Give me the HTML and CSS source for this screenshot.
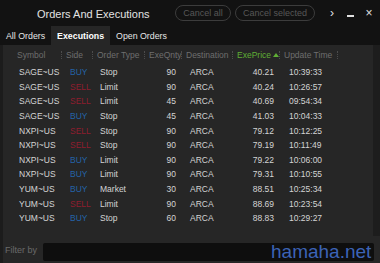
FILE: index.html
```html
<!DOCTYPE html>
<html>
<head>
    <title>Orders And Executions</title>
    <link rel="stylesheet" href="styles.css">
</head>
    <body>
        <div class="window">
            <!-- title bar with cancel buttons and window controls -->
            <div class="titlebar">
                <div class="title">Orders And Executions</div>
                <button class="pill">Cancel all</button>
                <button class="pill">Cancel selected</button>
                <div class="controls">
                    <span class="ctl">&#8250;</span>
                    <span class="ctl min"></span>
                    <span class="ctl">&#215;</span>
                </div>
            </div>
            <!-- tabs -->
            <div class="tabs">
                <div class="tab">All Orders</div>
                <div class="tab active">Executions</div>
                <div class="tab">Open Orders</div>
            </div>
            <!-- executions grid -->
            <div class="panel">
                <div class="grid-area">
                    <div class="grid">
                        <div class="row head">
                            <div class="hc first">Symbol</div>
                            <div class="hc">Side</div>
                            <div class="hc">Order Type</div>
                            <div class="hc">ExeQnty</div>
                            <div class="hc">Destination</div>
                            <div class="hc sorted">ExePrice <svg class="arrow" width="6" height="4" viewBox="0 0 6 4"><path d="M0 4 L3 0 L6 4 Z" fill="#5fae35"/></svg></div>
                            <div class="hc">Update Time</div>
                        </div>
                        <div id="rows"></div>
                    </div>
                    <div class="scrollbar"></div>
                </div>
                <!-- filter box -->
                <div class="filter">
                    <label for="filterBy">Filter by</label>
                    <input id="filterBy" type="text">
                </div>
            </div>
        </div>
        <div class="watermark">hamaha.net</div>

        <script>
            // executions shown in the grid
            const executions = [
                ["SAGE~US", "BUY", "Stop", 90, "ARCA", "40.21", "10:39:33"],
                ["SAGE~US", "SELL", "Limit", 90, "ARCA", "40.24", "10:26:57"],
                ["SAGE~US", "SELL", "Limit", 45, "ARCA", "40.69", "09:54:34"],
                ["SAGE~US", "BUY", "Stop", 45, "ARCA", "41.03", "10:04:33"],
                ["NXPI~US", "SELL", "Stop", 90, "ARCA", "79.12", "10:12:25"],
                ["NXPI~US", "SELL", "Stop", 90, "ARCA", "79.19", "10:11:49"],
                ["NXPI~US", "BUY", "Limit", 90, "ARCA", "79.22", "10:06:00"],
                ["NXPI~US", "BUY", "Limit", 90, "ARCA", "79.31", "10:10:55"],
                ["YUM~US", "BUY", "Market", 30, "ARCA", "88.51", "10:25:34"],
                ["YUM~US", "SELL", "Limit", 90, "ARCA", "88.69", "10:23:54"],
                ["YUM~US", "BUY", "Stop", 60, "ARCA", "88.83", "10:29:27"]
            ];

            const rows = document.getElementById("rows");
            executions.forEach(e => {
                const row = document.createElement("div");
                row.className = "row";
                row.innerHTML =
                    '<div class="c sym">' + e[0] + '</div>' +
                    '<div class="c side ' + e[1].toLowerCase() + '">' + e[1] + '</div>' +
                    '<div class="c type">' + e[2] + '</div>' +
                    '<div class="c qty">' + e[3] + '</div>' +
                    '<div class="c dest">' + e[4] + '</div>' +
                    '<div class="c price">' + e[5] + '</div>' +
                    '<div class="c time">' + e[6] + '</div>';
                rows.appendChild(row);
            });
        </script>
    </body>
</html>
```

FILE: styles.css
```css
body {
    margin: 0;
    background-color: #121212;
    font-family: "Liberation Sans", Arial, sans-serif;
    width: 380px;
    height: 263px;
    overflow: hidden;
}

.window {
    display: flex;
    flex-direction: column;
    height: 263px;
}

/* title bar */
.titlebar {
    height: 26px;
    display: flex;
    align-items: center;
    flex-shrink: 0;
}

.title {
    flex: 1;
    padding-left: 37px;
    font-size: 11px;
    color: #e2e2e2;
    padding-top: 1px;
}

.pill {
    height: 16px;
    margin-right: 4px;
    padding: 0;
    border: 1px solid #3c3c3c;
    border-radius: 8px;
    background: transparent;
    color: #575757;
    font-family: "Liberation Sans", Arial, sans-serif;
    font-size: 9px;
    line-height: 14px;
    white-space: nowrap;
}

.pill:first-of-type {
    width: 56px;
}

.pill:nth-of-type(2) {
    width: 80px;
}

.controls {
    display: flex;
    align-items: center;
    margin-left: 8px;
    margin-right: 6px;
    gap: 8px;
}

.ctl {
    width: 10px;
    text-align: center;
    color: #e0e0e0;
    font-size: 12px;
    line-height: 12px;
}

.ctl.min {
    height: 2px;
    width: 7px;
    margin: 6px 2px 0 2px;
    background-color: #e0e0e0;
}

/* tabs */
.tabs {
    height: 19px;
    display: flex;
    align-items: stretch;
    flex-shrink: 0;
}

.tab {
    padding: 0 6px;
    font-size: 8.8px;
    line-height: 20px;
    color: #e6e6e6;
}

.tab.active {
    background-color: #262626;
    font-weight: bold;
    color: #ffffff;
}

/* main panel */
.panel {
    flex: 1;
    display: flex;
    flex-direction: column;
    background-color: #262626;
    border-left: 3px solid #1c1c1c;
}

.grid-area {
    flex: 1;
    display: flex;
}

.grid {
    flex: 1;
}

.scrollbar {
    width: 7px;
    background-color: #1d1d1d;
}

.row {
    display: grid;
    grid-template-columns: 59px 31px 52px 37px 51px 47px 58px;
    height: 14.6px;
    align-items: center;
    font-size: 8.5px;
    color: #d4d4d4;
    white-space: nowrap;
}

.row.head {
    height: 20px;
    color: #6e6e6e;
}

.hc {
    position: relative;
    padding-left: 4px;
}

.hc.first {
    padding-left: 14px;
}

.hc::after {
    content: "";
    position: absolute;
    right: 0;
    top: 1px;
    height: 8px;
    border-left: 1px dotted #4c4c4c;
}

.hc.sorted {
    color: #5fae35;
}

.arrow {
    vertical-align: 1px;
}

.c.sym {
    padding-left: 16px;
}

.c.side {
    padding-left: 8px;
}

.buy {
    color: #2463a8;
}

.sell {
    color: #8f1d2e;
}

.c.type {
    padding-left: 7px;
}

.c.qty, .c.price {
    text-align: right;
    padding-right: 6px;
}

.c.dest {
    padding-left: 8px;
}

.c.time {
    padding-left: 9px;
}

/* filter bar */
.filter {
    height: 27px;
    display: flex;
    align-items: center;
    padding-right: 6px;
}

.filter label {
    width: 38px;
    padding-left: 2px;
    font-size: 9px;
    color: #6a6a6a;
}

.filter input {
    flex: 1;
    height: 18px;
    margin-top: 4px;
    border: none;
    border-radius: 2px;
    background-color: #0e0e0e;
    box-sizing: border-box;
}

.watermark {
    position: absolute;
    left: 271px;
    top: 242px;
    font-size: 19px;
    line-height: 20px;
    color: #3c63b6;
}
```
